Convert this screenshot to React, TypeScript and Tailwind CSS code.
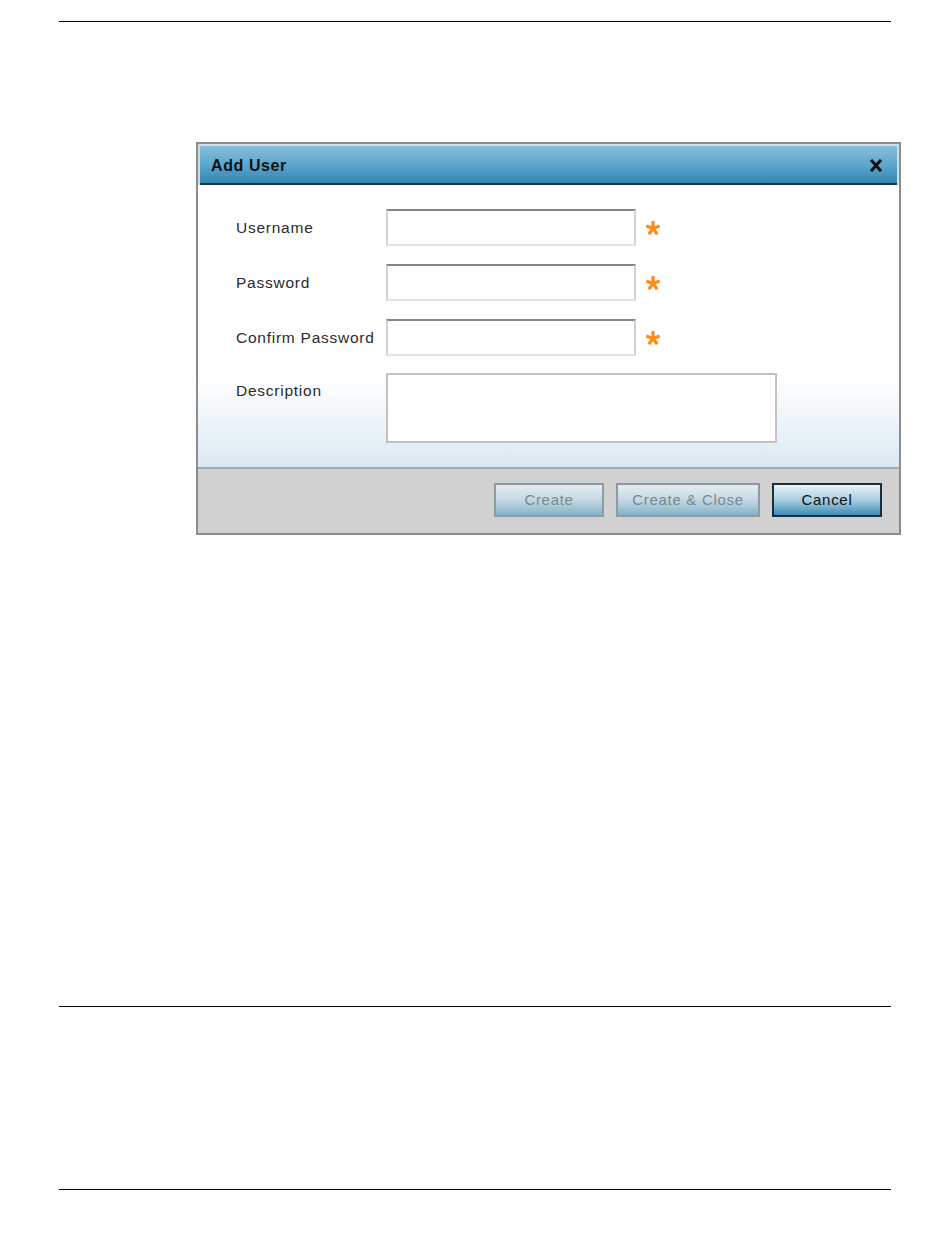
const font = { fontFamily: '"Liberation Sans", Arial, sans-serif' }

function Asterisk() {
  return (
    <svg width="16" height="16" viewBox="0 0 16 16" className="shrink-0">
      <g stroke="#ff8a14" strokeWidth="3.2" strokeLinecap="butt">
        <line x1="8" y1="8.4" x2="8" y2="1" />
        <line x1="8" y1="8.4" x2="14.7" y2="5.9" />
        <line x1="8" y1="8.4" x2="12.2" y2="14.2" />
        <line x1="8" y1="8.4" x2="3.8" y2="14.2" />
        <line x1="8" y1="8.4" x2="1.3" y2="5.9" />
      </g>
    </svg>
  )
}

function Field({ label }: { label: string }) {
  return (
    <div className="flex items-center">
      <label className="w-[150px] text-[15.5px] tracking-[0.75px] text-[#2b2b2b]">{label}</label>
      <input
        type={label === "Username" ? "text" : "password"}
        className="w-[250px] h-[37px] bg-white border-2 border-t-[#858585] border-x-[#d2d2d2] border-b-[#e2e2e2] outline-none"
      />
      <span className="ml-[9px]">
        <Asterisk />
      </span>
    </div>
  )
}

export default function App() {
  return (
    <div className="w-[950px] h-[1248px] bg-white" style={font}>
      <div className="pt-[21px] pl-[59px]">
        <div className="w-[832px] h-px bg-black" />
      </div>

      <div className="ml-[196px] mt-[120px] w-[705px] border-2 border-[#8c8c8c] bg-white">
        {/* title bar */}
        <div className="h-[41px] flex items-center justify-between pl-[11px] pr-[15px] border-2 border-b-0 border-[#d3dce2] bg-linear-to-b from-[#86bfdc] via-[#5aa5cd] to-[#2a83b0] shadow-[inset_0_-2px_0_#1b3547]">
          <span className="text-[16px] font-bold tracking-[0.6px] text-[#111]">Add User</span>
          <svg width="12" height="13" viewBox="0 0 12 13">
            <g stroke="#111" strokeWidth="3" strokeLinecap="square">
              <line x1="2" y1="2" x2="10" y2="11" />
              <line x1="10" y1="2" x2="2" y2="11" />
            </g>
          </svg>
        </div>

        {/* form */}
        <div className="pt-[24px] pb-[24px] pl-[38px] flex flex-col bg-linear-to-b from-white from-[68%] to-[#dbe9f2]">
          <div className="flex flex-col gap-[18px]">
            <Field label="Username" />
            <Field label="Password" />
            <Field label="Confirm Password" />
          </div>
          <div className="flex items-start mt-[17px]">
            <label className="w-[150px] pt-[6px] text-[15.5px] tracking-[0.75px] text-[#2b2b2b]">Description</label>
            <textarea className="w-[391px] h-[70px] resize-none bg-white border-2 border-[#c2c2c2] outline-none" />
          </div>
        </div>

        {/* buttons */}
        <div className="h-[66px] border-t-2 border-[#a8a8a8] bg-[#d1d1d1] flex justify-end gap-3 pr-[17px] pt-[14px]">
          <button className="w-[110px] h-[34px] border-2 border-[#8d9ba3] bg-linear-to-b from-[#e6eef2] via-[#c3d8e3] to-[#86b2c8] text-[15px] tracking-[0.7px] text-[#7b8890]">
            Create
          </button>
          <button className="w-[144px] h-[34px] border-2 border-[#8d9ba3] bg-linear-to-b from-[#e6eef2] via-[#c3d8e3] to-[#86b2c8] text-[15px] tracking-[0.7px] text-[#7b8890]">
            Create &amp; Close
          </button>
          <button className="w-[110px] h-[34px] border-2 border-[#1d2f3b] bg-linear-to-b from-[#eaf3f8] via-[#a8cfe2] to-[#3a8bb5] text-[15px] tracking-[0.7px] text-[#111]">
            Cancel
          </button>
        </div>
      </div>

      <div className="pt-[471px] pl-[59px]">
        <div className="w-[832px] h-px bg-black" />
      </div>
      <div className="pt-[182px] pl-[59px]">
        <div className="w-[832px] h-px bg-black" />
      </div>
    </div>
  )
}
